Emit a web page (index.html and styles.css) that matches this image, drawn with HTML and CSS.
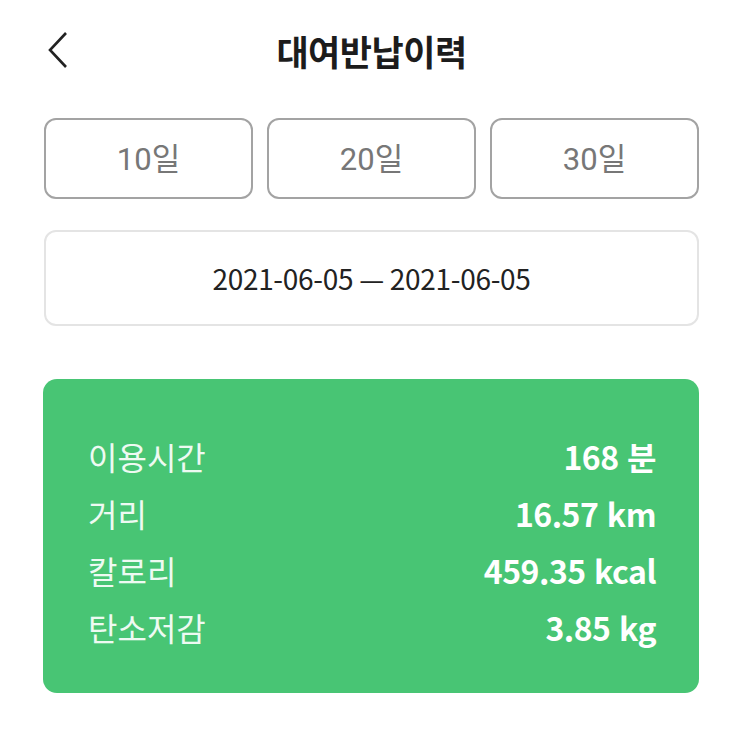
FILE: index.html
```html
<!DOCTYPE html>
<html lang="ko">
<head>
<meta charset="utf-8">
<link rel="stylesheet" href="styles.css">
</head>
<body>
<div class="page">
  <header class="header">
    <svg class="back" width="24" height="38" viewBox="0 0 24 38"><path d="M20 2 L4 19 L20 36" fill="none" stroke="#222" stroke-width="2.6" stroke-linejoin="miter"/></svg>
    <h1 class="title">대여반납이력</h1>
  </header>
  <div class="periods">
    <button class="period">10일</button>
    <button class="period">20일</button>
    <button class="period">30일</button>
  </div>
  <div class="range">2021-06-05 — 2021-06-05</div>
  <div class="card">
    <div class="row"><span class="label">이용시간</span><span class="value">168 분</span></div>
    <div class="row"><span class="label">거리</span><span class="value">16.57 km</span></div>
    <div class="row"><span class="label">칼로리</span><span class="value">459.35 kcal</span></div>
    <div class="row"><span class="label">탄소저감</span><span class="value">3.85 kg</span></div>
  </div>
</div>
</body>
</html>
```
FILE: styles.css
```css
* { box-sizing: border-box; }
html, body { margin: 0; padding: 0; background: #fff; }
body { font-family: "Noto Sans CJK KR", "Noto Sans", sans-serif; }
.page { width: 743px; padding: 0 44px 0 44px; }
.header { position: relative; height: 104px; display: flex; align-items: center; justify-content: center; }
.back { position: absolute; left: 2px; top: 31px; }
.title { margin: 0; font-size: 35px; font-weight: 700; color: #1c1c1c; line-height: 1; padding-bottom: 4px; letter-spacing: -0.5px; }
.periods { display: grid; grid-template-columns: repeat(3, 1fr); gap: 14px; margin-top: 14px; }
.period { height: 81px; border: 2px solid #a3a3a3; border-radius: 12px; background: #fff; font-family: "Roboto", "Noto Sans CJK KR", sans-serif; font-size: 31px; color: #777; padding: 0 0 4px 0; }
.range { margin-top: 31px; height: 96px; border: 2px solid #e4e4e4; border-radius: 12px; display: flex; align-items: center; justify-content: center; font-size: 28px; color: #222; letter-spacing: -0.3px; }
.card { margin-top: 53px; margin-left: -1px; background: #48c574; border-radius: 14px; padding: 48px 43px 38px 45px; }
.row { display: flex; justify-content: space-between; align-items: center; height: 57px; }
.label { font-size: 32px; color: #eefaf2; }
.value { font-size: 32px; font-weight: 700; color: #fff; letter-spacing: -0.5px; }
```
